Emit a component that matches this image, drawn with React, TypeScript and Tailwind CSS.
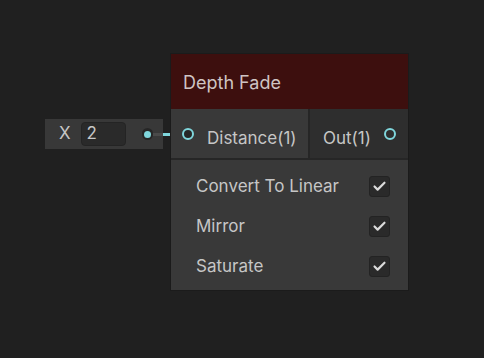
import { Check } from 'lucide-react';

const options = ['Convert To Linear', 'Mirror', 'Saturate'];

function Checkbox() {
  return (
    <div className="w-[21px] h-[21px] rounded-[3px] bg-[#2a2a2a] border border-[#232323] flex items-center justify-center">
      <Check size={15} strokeWidth={3.4} className="text-[#dcdcdc]" />
    </div>
  );
}

export default function App() {
  return (
    <div
      className="relative w-[484px] h-[358px] bg-[#202020] text-[#c6c6c6] overflow-hidden"
      style={{ fontFamily: 'Inter, "Noto Sans", sans-serif' }}
    >
      {/* connected float input */}
      <div className="absolute left-[45px] top-[119px] w-[118px] h-[30px] bg-[#383838] flex items-center">
        <span className="ml-[14px] w-[22px] text-[17px]">X</span>
        <div className="ml-[1px] w-[45px] h-[24px] rounded-[4px] bg-[#2a2a2a] border border-[#242424] flex items-center px-[4px] text-[17px]">
          2
        </div>
        <div className="ml-[16px] w-[12px] h-[12px] rounded-full bg-[#262626] flex items-center justify-center">
          <div className="w-[7px] h-[7px] rounded-full bg-[#7fd6dc]" />
        </div>
        <div className="w-[10px] h-[3px] bg-[#4a4a4a]" />
      </div>
      <div className="absolute left-[163px] top-[133px] w-[20px] h-[3px] bg-[#7fd6dc]" />

      {/* node */}
      <div className="absolute left-[170px] top-[53px] w-[239px] border border-[#1b1b1b]">
        <div className="h-[55px] bg-[#3d0f0e] flex items-center px-[12px] pt-[1px] text-[18px] text-[#cfc4c3]">
          Depth Fade
        </div>
        <div className="h-[51px] flex border-b-2 border-[#262626]">
          <div className="w-[137px] bg-[#393939] flex items-center">
            <div className="ml-[11px] w-[12px] h-[12px] rounded-full border-2 border-[#7fd6dc] bg-[#262626]" />
            <span className="ml-[13px] pt-[10px] text-[17px]">Distance(1)</span>
          </div>
          <div className="w-[2px] bg-[#262626]" />
          <div className="flex-1 bg-[#2e2e2e] flex items-center">
            <span className="ml-[13px] pt-[10px] text-[17px]">Out(1)</span>
            <div className="ml-[13px] w-[12px] h-[12px] rounded-full border-2 border-[#7fd6dc] bg-[#2e2e2e]" />
          </div>
        </div>
        <div className="bg-[#393939] pt-[16px] pb-[13px] flex flex-col gap-[19px]">
          {options.map((o) => (
            <div key={o} className="h-[21px] flex items-center justify-between pl-[25px] pr-[18px] text-[17px]">
              <span>{o}</span>
              <Checkbox />
            </div>
          ))}
        </div>
      </div>
    </div>
  );
}
